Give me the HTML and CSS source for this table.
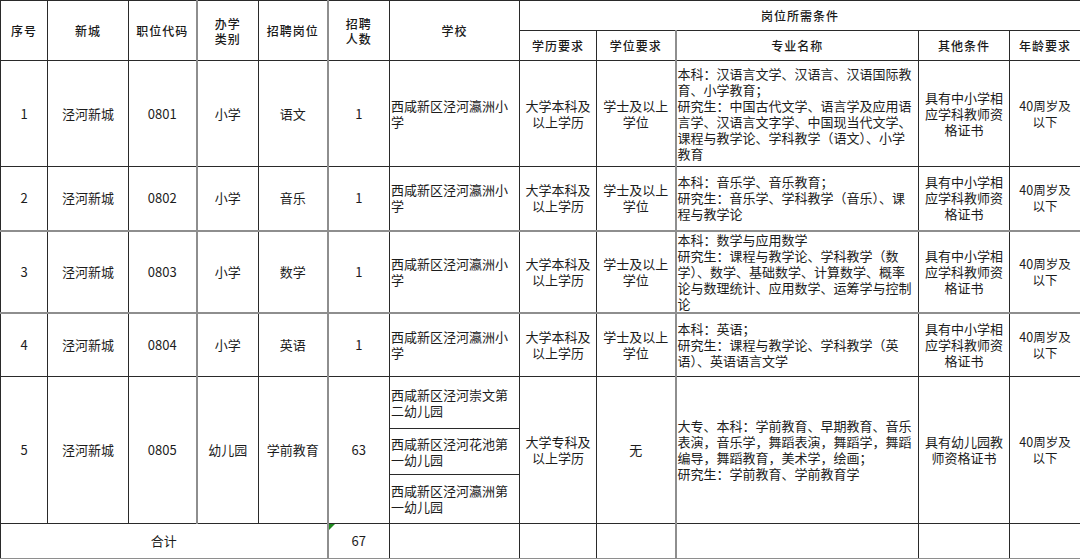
FILE: index.html
```html
<!DOCTYPE html>
<html lang="zh-CN">
<head>
<meta charset="utf-8">
<title>岗位表</title>
<link rel="stylesheet" href="styles.css">
</head>
<body>
<table class="jobs">
  <colgroup>
    <col class="c1"><col class="c2"><col class="c3"><col class="c4"><col class="c5"><col class="c6">
    <col class="c7"><col class="c8"><col class="c9"><col class="c10"><col class="c11"><col class="c12">
  </colgroup>
  <thead>
    <tr class="h1">
      <th rowspan="2">序号</th>
      <th rowspan="2">新城</th>
      <th rowspan="2">职位代码</th>
      <th rowspan="2">办学<br>类别</th>
      <th rowspan="2">招聘岗位</th>
      <th rowspan="2">招聘<br>人数</th>
      <th rowspan="2">学校</th>
      <th colspan="5">岗位所需条件</th>
    </tr>
    <tr class="h2">
      <th>学历要求</th>
      <th>学位要求</th>
      <th>专业名称</th>
      <th>其他条件</th>
      <th>年龄要求</th>
    </tr>
  </thead>
  <tbody>
    <tr class="r1">
      <td>1</td><td>泾河新城</td><td>0801</td><td>小学</td><td>语文</td><td>1</td>
      <td class="left">西咸新区泾河瀛洲小<br>学</td>
      <td>大学本科及<br>以上学历</td>
      <td>学士及以上<br>学位</td>
      <td class="left">本科：汉语言文学、汉语言、汉语国际教<br>育、小学教育；<br>研究生：中国古代文学、语言学及应用语<br>言学、汉语言文字学、中国现当代文学、<br>课程与教学论、学科教学（语文）、小学<br>教育</td>
      <td>具有中小学相<br>应学科教师资<br>格证书</td>
      <td class="age">40周岁及<br>以下</td>
    </tr>
    <tr class="r2">
      <td>2</td><td>泾河新城</td><td>0802</td><td>小学</td><td>音乐</td><td>1</td>
      <td class="left">西咸新区泾河瀛洲小<br>学</td>
      <td>大学本科及<br>以上学历</td>
      <td>学士及以上<br>学位</td>
      <td class="left">本科：音乐学、音乐教育；<br>研究生：音乐学、学科教学（音乐）、课<br>程与教学论</td>
      <td>具有中小学相<br>应学科教师资<br>格证书</td>
      <td class="age">40周岁及<br>以下</td>
    </tr>
    <tr class="r3">
      <td>3</td><td>泾河新城</td><td>0803</td><td>小学</td><td>数学</td><td>1</td>
      <td class="left">西咸新区泾河瀛洲小<br>学</td>
      <td>大学本科及<br>以上学历</td>
      <td>学士及以上<br>学位</td>
      <td class="left">本科：数学与应用数学<br>研究生：课程与教学论、学科教学（数<br>学）、数学、基础数学、计算数学、概率<br>论与数理统计、应用数学、运筹学与控制<br>论</td>
      <td>具有中小学相<br>应学科教师资<br>格证书</td>
      <td class="age">40周岁及<br>以下</td>
    </tr>
    <tr class="r4">
      <td>4</td><td>泾河新城</td><td>0804</td><td>小学</td><td>英语</td><td>1</td>
      <td class="left">西咸新区泾河瀛洲小<br>学</td>
      <td>大学本科及<br>以上学历</td>
      <td>学士及以上<br>学位</td>
      <td class="left">本科：英语；<br>研究生：课程与教学论、学科教学（英<br>语）、英语语言文学</td>
      <td>具有中小学相<br>应学科教师资<br>格证书</td>
      <td class="age">40周岁及<br>以下</td>
    </tr>
    <tr class="r5a">
      <td rowspan="3">5</td><td rowspan="3">泾河新城</td><td rowspan="3">0805</td><td rowspan="3">幼儿园</td><td rowspan="3">学前教育</td><td rowspan="3">63</td>
      <td class="left">西咸新区泾河崇文第<br>二幼儿园</td>
      <td rowspan="3">大学专科及<br>以上学历</td>
      <td rowspan="3">无</td>
      <td rowspan="3" class="left">大专、本科：学前教育、早期教育、音乐<br>表演，音乐学，舞蹈表演，舞蹈学，舞蹈<br>编导，舞蹈教育，美术学，绘画；<br>研究生：学前教育、学前教育学</td>
      <td rowspan="3">具有幼儿园教<br>师资格证书</td>
      <td rowspan="3" class="age">40周岁及<br>以下</td>
    </tr>
    <tr class="r5b">
      <td class="left">西咸新区泾河花池第<br>一幼儿园</td>
    </tr>
    <tr class="r5c">
      <td class="left">西咸新区泾河瀛洲第<br>一幼儿园</td>
    </tr>
    <tr class="total">
      <td colspan="5">合计</td>
      <td class="mark">67</td>
      <td></td><td></td><td></td><td></td><td></td><td></td>
    </tr>
  </tbody>
</table>
</body>
</html>
```

FILE: styles.css
```css
html, body {
  margin: 0;
  padding: 0;
  background: #ffffff;
}

body {
  font-family: "Noto Sans CJK SC", "Noto Sans", sans-serif;
  color: #1c1c1c;
}

.jobs {
  width: 1080px;
  table-layout: fixed;
  border-collapse: collapse;
  font-size: 13px;
  line-height: 16px;
}

.c1 { width: 47px; }
.c2 { width: 81px; }
.c3 { width: 68px; }
.c4 { width: 62px; border-left: 2px solid #8e8e8e; }
.c5 { width: 69px; }
.c6 { width: 62px; border-left: 2px solid #8e8e8e; }
.c7 { width: 130px; }
.c8 { width: 77px; }
.c9 { width: 79px; }
.c10 { width: 243px; border-left: 2px solid #8e8e8e; }
.c11 { width: 91px; }
.c12 { width: 71px; }

.jobs th,
.jobs td {
  border: 1px solid #2a2a2a;
  padding: 0 2px;
  text-align: center;
  vertical-align: middle;
  white-space: nowrap;
  overflow: hidden;
}

.jobs th {
  font-size: 12px;
  font-weight: 500;
  letter-spacing: 1px;
  line-height: 15px;
  color: #1a1a1a;
}

.jobs td.left {
  text-align: left;
  padding-left: 1px;
}

.jobs td.age {
  font-size: 12.5px;
}

.h1 { height: 30px; }
.h2 { height: 30px; }
.r1 { height: 106px; }
.r2 { height: 64px; }
.r3 { height: 77px; border-top: 2px solid #8e8e8e; }
.r4 { height: 64px; border-top: 2px solid #8e8e8e; }
.r5a { height: 52px; }
.r5b { height: 46px; }
.r5c { height: 49px; }
.total { height: 35px; border-bottom: 2px solid #8e8e8e; }

.jobs td.mark {
  position: relative;
}

.jobs td.mark::before {
  content: "";
  position: absolute;
  top: 0;
  left: 0;
  width: 0;
  height: 0;
  border-top: 6px solid #1f8a1f;
  border-right: 6px solid transparent;
}
```
